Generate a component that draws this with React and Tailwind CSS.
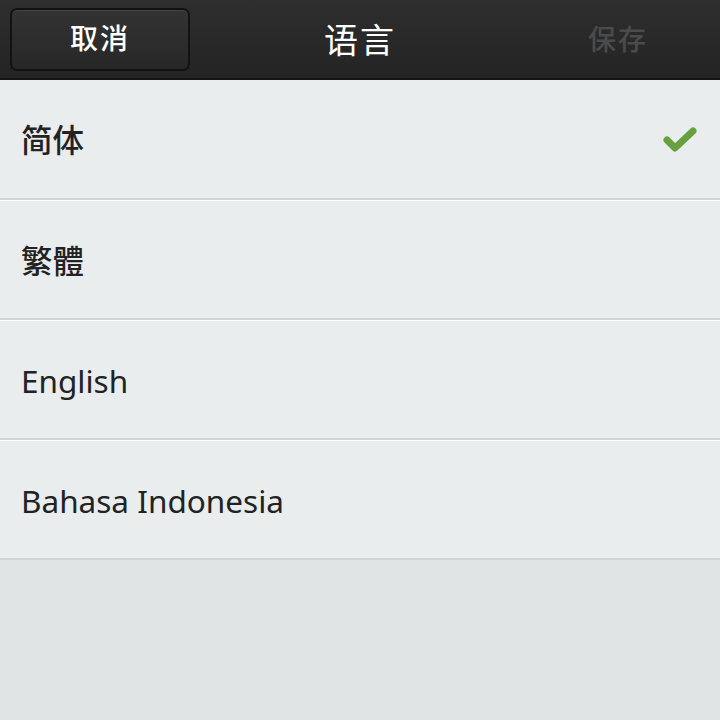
const rows = [
  { label: '简体', cjk: true, checked: true },
  { label: '繁體', cjk: true },
  { label: 'English' },
  { label: 'Bahasa Indonesia' },
];

const font = { fontFamily: '"Noto Sans", "Noto Sans CJK SC", sans-serif' };

export default function App() {
  return (
    <div className="w-[720px] h-[720px] flex flex-col bg-[#dfe4e4] overflow-hidden" style={font}>
      {/* header */}
      <div className="h-[80px] shrink-0 grid grid-cols-3 items-center px-[10px] bg-gradient-to-b from-[#2e2e2e] to-[#242424] border-b-2 border-[#151515]">
        <div className="flex">
          <button className="w-[180px] h-[63px] rounded-[7px] border-2 border-[#121212] bg-gradient-to-b from-[#333333] to-[#272727] shadow-[inset_0_1px_0_rgba(255,255,255,0.08)] text-white text-[28px] font-medium tracking-[2px] pb-[3px]">
            取消
          </button>
        </div>
        <h1 className="text-center text-white text-[34px] font-normal tracking-[2px] pt-[2px]">语言</h1>
        <div className="flex justify-end pr-[62px]">
          <span className="text-[#4b4b4b] text-[28px] font-medium tracking-[2px]">保存</span>
        </div>
      </div>

      {/* list */}
      <div className="flex flex-col">
        {rows.map((r) => (
          <div
            key={r.label}
            className="h-[120px] flex items-center justify-between pl-[21px] pr-[22px] bg-[#e9edee] border-t border-white border-b-2 border-b-[#d3d6d6] first:border-t-0"
          >
            <span className={(r.cjk ? 'font-medium ' : 'font-normal ') + 'text-[#222222] text-[31.5px] pt-[2px]'}>{r.label}</span>
            {r.checked && (
              <svg width="36" height="30" viewBox="0 0 36 30">
                <path d="M5 16 L13 24 L31 7" fill="none" stroke="#67a03c" strokeWidth="7" strokeLinecap="round" strokeLinejoin="round" />
              </svg>
            )}
          </div>
        ))}
      </div>
    </div>
  );
}
